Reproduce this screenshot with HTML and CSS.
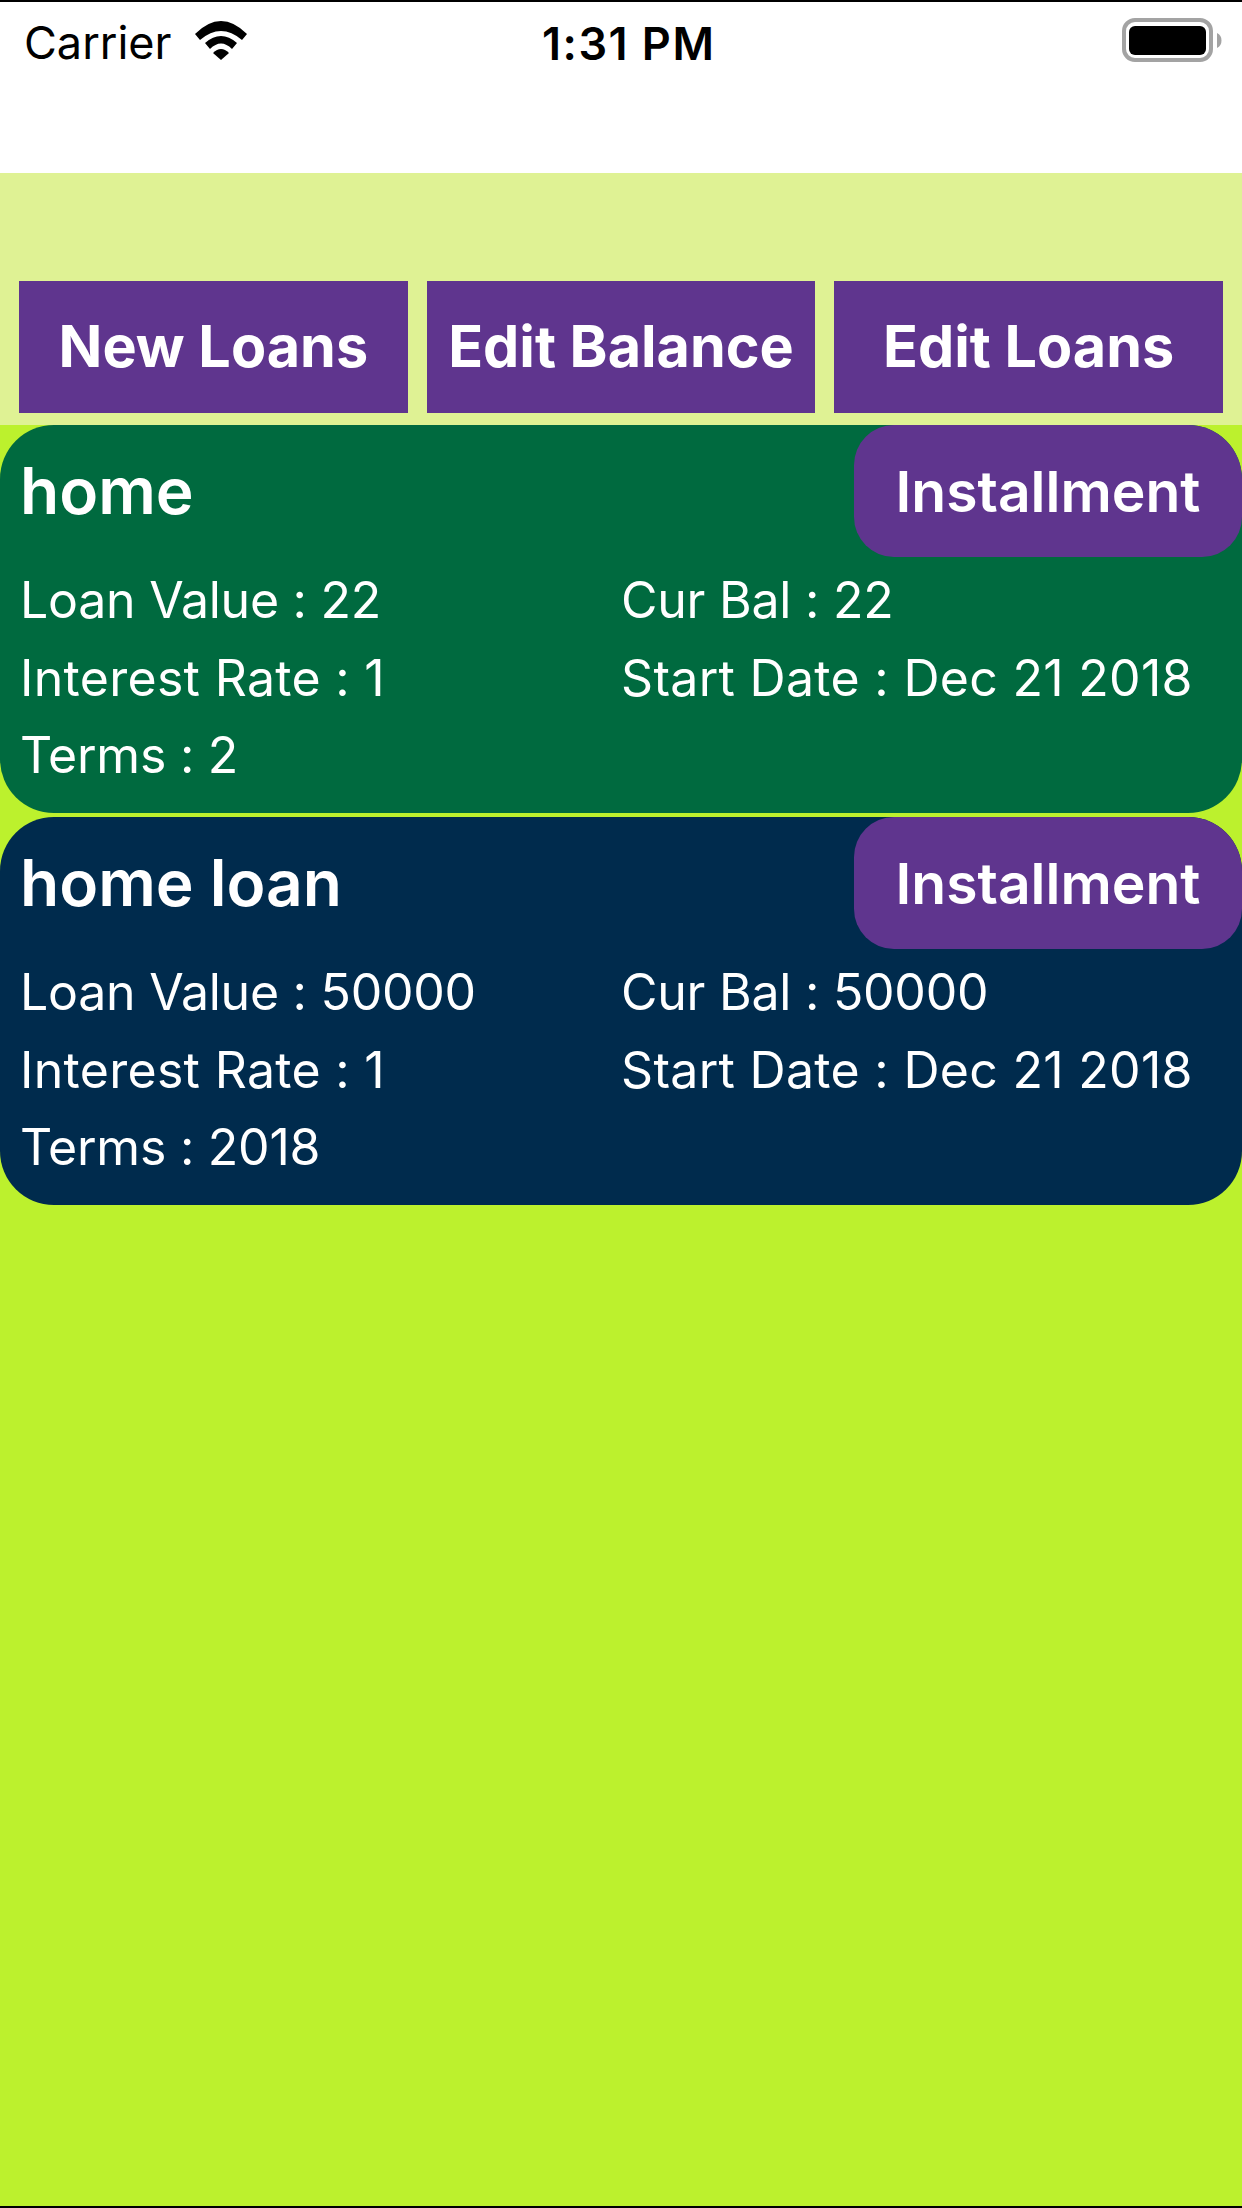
FILE: index.html
```html
<!DOCTYPE html>
<html lang="en">
<head>
    <meta charset="UTF-8">
    <title>Loans</title>
    <link rel="stylesheet" href="styles.css">
</head>
<body>
    <div class="page">
        <header class="status-bar">
            <div class="status-left">
                <span class="carrier">Carrier</span>
                <svg class="wifi" width="54" height="39" viewBox="0 0 54 39">
                    <path d="M1 13 Q27 -13 53 13 L48 19 Q27 1 6 19 Z" fill="#000"/>
                    <path d="M11 22 Q27 8 43 22 L38 28 Q27 17 16 28 Z" fill="#000"/>
                    <path d="M19 32 Q27 24 35 32 L27 39 Z" fill="#000"/>
                </svg>
            </div>
            <span class="clock">1:31 PM</span>
            <svg class="battery" width="101" height="44" viewBox="0 0 101 44">
                <rect x="2" y="2" width="87" height="40" rx="11" fill="none" stroke="#a3a3a3" stroke-width="4"/>
                <rect x="7" y="8" width="77" height="29" rx="6" fill="#000"/>
                <path d="M95 15 C101 17 101 28 95 30 Z" fill="#a3a3a3"/>
            </svg>
        </header>

        <div class="toolbar">
            <a class="tool-btn">New Loans</a>
            <a class="tool-btn">Edit Balance</a>
            <a class="tool-btn">Edit Loans</a>
        </div>

        <section class="loan loan-green">
            <div class="loan-head">
                <h2 class="loan-name">home</h2>
                <a class="install-btn">Installment</a>
            </div>
            <div class="loan-info">
                <span class="tight">Loan Value : 22</span>
                <span class="tight">Cur Bal : 22</span>
                <span>Interest Rate : 1</span>
                <span>Start Date : Dec 21 2018</span>
                <span class="tight">Terms : 2</span>
            </div>
        </section>

        <section class="loan loan-navy">
            <div class="loan-head">
                <h2 class="loan-name">home loan</h2>
                <a class="install-btn">Installment</a>
            </div>
            <div class="loan-info">
                <span class="tight">Loan Value : 50000</span>
                <span class="tight">Cur Bal : 50000</span>
                <span>Interest Rate : 1</span>
                <span>Start Date : Dec 21 2018</span>
                <span class="tight">Terms : 2018</span>
            </div>
        </section>
    </div>
</body>
</html>
```

FILE: styles.css
```css
*{
    padding: 0;
    margin: 0;
    box-sizing: border-box;
}
body{
    background: #bcf12d;
    font-family: "Inter", "Liberation Sans", sans-serif;
}
.page{
    height: 2208px;
    border-top: 2px solid #000;
    border-bottom: 2px solid #000;
    overflow: hidden;
}
.status-bar{
    display: flex;
    align-items: flex-start;
    height: 171px;
    padding: 16px 19px 0 24px;
    background: #fff;
    color: #000;
}
.status-left{
    display: flex;
    align-items: flex-start;
    gap: 22px;
    width: 518px;
}
.carrier{
    font-size: 45px;
    line-height: 50px;
}
.wifi{
    margin-top: 3px;
}
.clock{
    font-size: 45px;
    line-height: 51px;
    font-weight: 600;
    letter-spacing: 1.5px;
}
.battery{
    margin-left: auto;
}
.toolbar{
    display: flex;
    gap: 19px;
    height: 252px;
    padding: 108px 19px 12px;
    background: #dff294;
}
.tool-btn{
    flex: 1;
    display: flex;
    justify-content: center;
    align-items: center;
    padding-bottom: 2px;
    background: #5f358e;
    color: #fff;
    font-size: 57.500px;
    font-weight: 700;
}
.loan{
    height: 388px;
    margin-bottom: 4px;
    border-radius: 54px;
    color: #fff;
    overflow: hidden;
}
.loan-green{
    background: #006a3f;
}
.loan-navy{
    background: #002b4d;
}
.loan-head{
    display: flex;
    justify-content: space-between;
    align-items: center;
    height: 132px;
    padding-left: 20px;
}
.loan-name{
    padding-bottom: 2px;
    font-size: 64px;
    font-weight: 600;
}
.install-btn{
    display: flex;
    justify-content: center;
    align-items: center;
    width: 388px;
    height: 132px;
    border-radius: 40px;
    background: #5f358e;
    font-size: 57px;
    font-weight: 600;
}
.loan-info{
    display: grid;
    grid-template-columns: 601px 1fr;
    grid-auto-rows: 77.500px;
    padding: 5px 0 0 20px;
    font-size: 50px;
    line-height: 77px;
    letter-spacing: 0.3px;
    white-space: nowrap;
}
.tight{
    letter-spacing: -0.25px;
}
```
